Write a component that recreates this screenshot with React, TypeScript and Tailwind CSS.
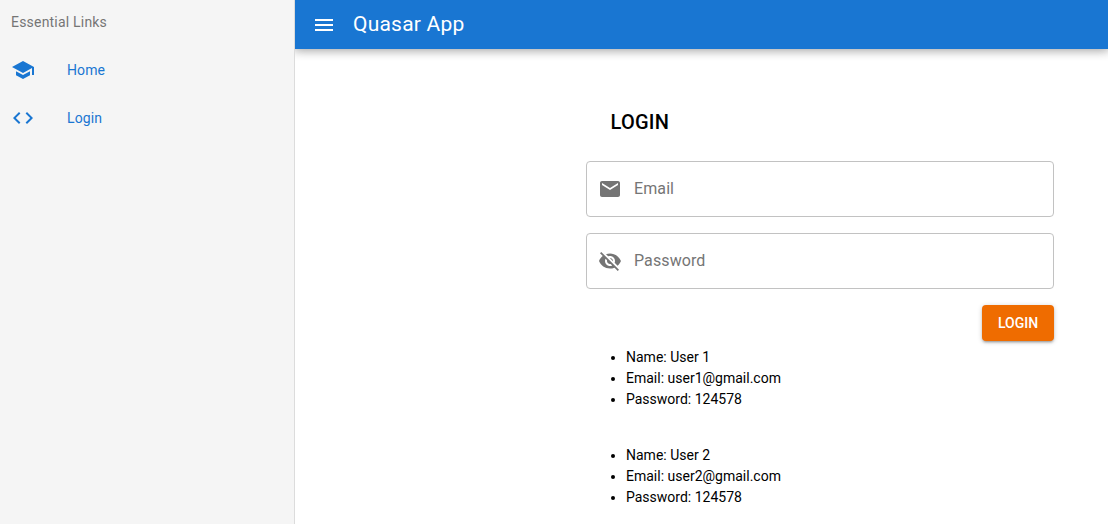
import type { ReactNode } from "react";

const ICONS = {
  school: "M5 13.18v4L12 21l7-3.82v-4L12 17l-7-3.82zM12 3L1 9l11 6 9-4.91V17h2V9L12 3z",
  code: "M9.4 16.6L4.8 12l4.6-4.6L8 6l-6 6 6 6 1.4-1.4zm5.2 0l4.6-4.6-4.6-4.6L16 6l6 6-6 6-1.4-1.4z",
  menu: "M3 18h18v-2H3v2zm0-5h18v-2H3v2zm0-7v2h18V6H3z",
  mail: "M20 4H4c-1.1 0-1.99.9-1.99 2L2 18c0 1.1.9 2 2 2h16c1.1 0 2-.9 2-2V6c0-1.1-.9-2-2-2zm0 4l-8 5-8-5V6l8 5 8-5v2z",
  eyeOff:
    "M12 7c2.76 0 5 2.24 5 5 0 .65-.13 1.26-.36 1.83l2.92 2.92c1.51-1.26 2.7-2.89 3.43-4.75-1.73-4.39-6-7.5-11-7.5-1.4 0-2.74.25-3.98.7l2.16 2.16C10.74 7.13 11.35 7 12 7zM2 4.27l2.28 2.28.46.46C3.08 8.3 1.78 10.02 1 12c1.73 4.39 6 7.5 11 7.5 1.55 0 3.03-.3 4.38-.84l.42.42L19.73 22 21 20.73 3.27 3 2 4.27zM7.53 9.8l1.55 1.55c-.05.21-.08.43-.08.65 0 1.66 1.34 3 3 3 .22 0 .44-.03.65-.08l1.55 1.55c-.67.33-1.41.53-2.2.53-2.76 0-5-2.24-5-5 0-.79.2-1.53.53-2.2zm4.31-.78l3.15 3.15.02-.16c0-1.66-1.34-3-3-3l-.17.01z",
};

function Icon({ d, className }: { d: string; className: string }) {
  return (
    <svg viewBox="0 0 24 24" fill="currentColor" aria-hidden className={className}>
      <path d={d} />
    </svg>
  );
}

function NavLink({ icon, children }: { icon: string; children: ReactNode }) {
  return (
    <a className="flex h-12 items-center px-[11px] text-sm text-[#1976d2]">
      <span className="w-14">
        <Icon d={icon} className="h-6 w-6" />
      </span>
      <span className="tracking-[0.1px]">{children}</span>
    </a>
  );
}

function Field({ icon, label }: { icon: string; label: string }) {
  return (
    <div className="flex h-14 items-center rounded border border-[#c2c2c2] pl-[11px] text-base text-[#757575]">
      <Icon d={icon} className="mr-3 h-6 w-6" />
      <span className="tracking-[0.1px]">{label}</span>
    </div>
  );
}

function Account({ name }: { name: string }) {
  return (
    <ul className="list-disc pl-10 text-sm leading-[21px] text-black">
      <li>Name: User {name}</li>
      <li>Email: user{name}@gmail.com</li>
      <li>Password: 124578</li>
    </ul>
  );
}

export default function App() {
  return (
    <div className="flex h-[524px] w-[1108px] overflow-hidden bg-white font-['Roboto',sans-serif]">
      <aside className="relative z-20 w-[295px] shrink-0 border-r border-[#dcdcdc] bg-[#f5f5f5]">
        <div className="flex h-[44px] items-center px-[11px] pb-px text-sm tracking-[0.2px] text-[#757575]">
          Essential Links
        </div>
        <div className="pt-[2px]">
          <NavLink icon={ICONS.school}>Home</NavLink>
          <NavLink icon={ICONS.code}>Login</NavLink>
        </div>
      </aside>

      <div className="flex min-w-0 flex-1 flex-col">
        <header className="relative z-10 flex h-[49px] items-center bg-[#1976d2] pl-[17px] text-white shadow-[0_0_10px_2px_rgba(0,0,0,0.2),0_0_10px_rgba(0,0,0,0.24)]">
          <Icon d={ICONS.menu} className="h-6 w-6" />
          <span className="ml-[17px] text-[21px] leading-none tracking-[0.21px]">Quasar App</span>
        </header>

        <main className="flex flex-1 justify-end pr-[54px] pt-[58px]">
          <div className="w-[468px]">
            <h1 className="mb-[26px] pl-[24.5px] pt-[2px] text-xl leading-[26px] font-medium tracking-[0.25px] text-black">
              LOGIN
            </h1>
            <div className="flex flex-col gap-4">
              <Field icon={ICONS.mail} label="Email" />
              <Field icon={ICONS.eyeOff} label="Password" />
            </div>
            <div className="mt-4 flex justify-end">
              <button className="h-9 w-[72px] rounded bg-[#ef6c00] text-sm font-medium text-white shadow-[0_1px_5px_rgba(0,0,0,0.2),0_2px_2px_rgba(0,0,0,0.14),0_3px_1px_-2px_rgba(0,0,0,0.12)]">
                LOGIN
              </button>
            </div>
            <div className="mt-[6px] flex flex-col gap-[35px]">
              <Account name="1" />
              <Account name="2" />
            </div>
          </div>
        </main>
      </div>
    </div>
  );
}
